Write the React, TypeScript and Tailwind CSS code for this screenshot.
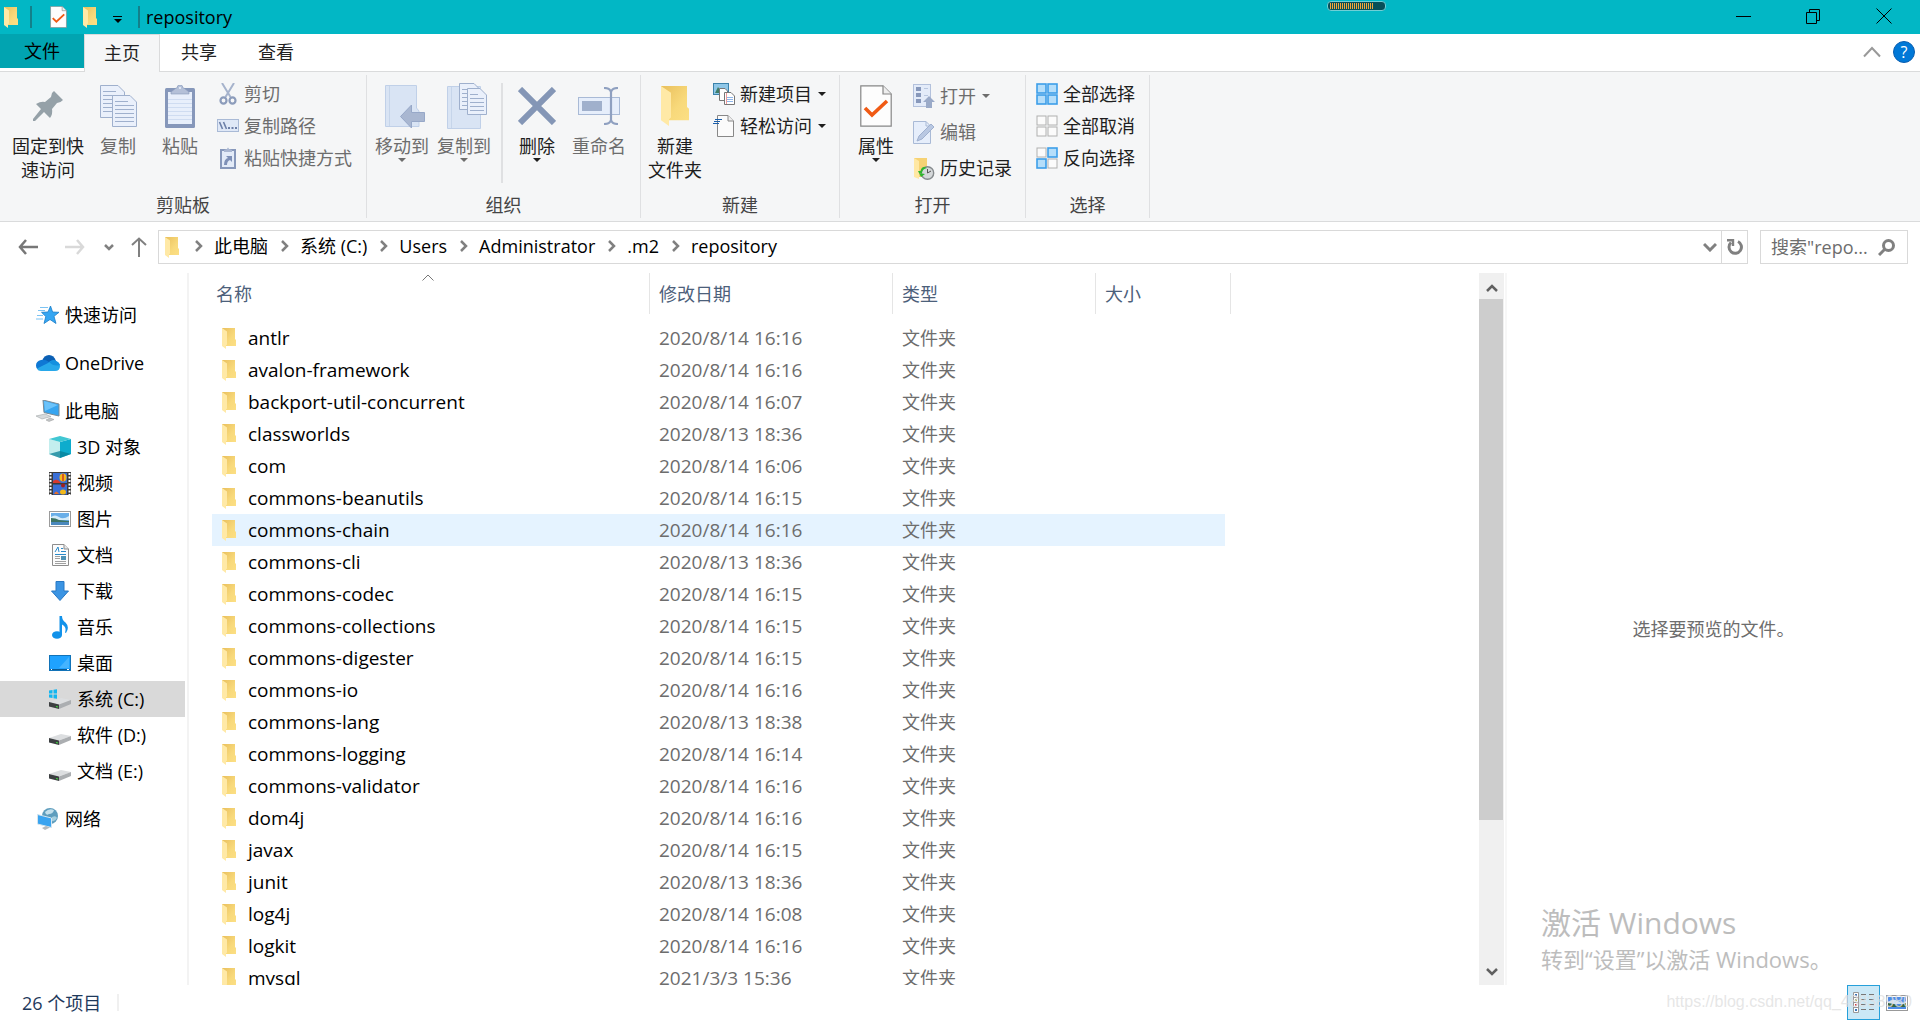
import type { ReactNode } from 'react';

const files = [
  ['antlr', '2020/8/14 16:16'],
  ['avalon-framework', '2020/8/14 16:16'],
  ['backport-util-concurrent', '2020/8/14 16:07'],
  ['classworlds', '2020/8/13 18:36'],
  ['com', '2020/8/14 16:06'],
  ['commons-beanutils', '2020/8/14 16:15'],
  ['commons-chain', '2020/8/14 16:16'],
  ['commons-cli', '2020/8/13 18:36'],
  ['commons-codec', '2020/8/14 16:15'],
  ['commons-collections', '2020/8/14 16:15'],
  ['commons-digester', '2020/8/14 16:15'],
  ['commons-io', '2020/8/14 16:16'],
  ['commons-lang', '2020/8/13 18:38'],
  ['commons-logging', '2020/8/14 16:14'],
  ['commons-validator', '2020/8/14 16:16'],
  ['dom4j', '2020/8/14 16:16'],
  ['javax', '2020/8/14 16:15'],
  ['junit', '2020/8/13 18:36'],
  ['log4j', '2020/8/14 16:08'],
  ['logkit', '2020/8/14 16:16'],
  ['mysql', '2021/3/3 15:36'],
];

const crumbs = ['此电脑', '系统 (C:)', 'Users', 'Administrator', '.m2', 'repository'];

const FolderIcon = ({ className = 'h-[21px] w-[14px]' }: { className?: string }) => (
  <svg viewBox="0 0 28 42" className={className} preserveAspectRatio="none">
    <defs>
      <linearGradient id="folderBack" x1="0" y1="0" x2="1" y2="1">
        <stop offset="0" stopColor="#e9bf5c" />
        <stop offset="0.6" stopColor="#f8d97b" />
        <stop offset="1" stopColor="#fcdf84" />
      </linearGradient>
    </defs>
    <path d="M0 0H26V22L28 24V36H8L0 30Z" fill="url(#folderBack)" />
    <path d="M0 0L10 7V33L8 35V42L0 36Z" fill="#ffe9a6" />
  </svg>
);

const PinIcon = () => (
  <svg viewBox="0 0 30 30" className="h-[30px] w-[30px]">
    <path d="M21 0L30 9L27.500 11L24 12L19 18Q20 23 17 27L11 21L2 30H0V28L8 18L3 13Q8 10 12 11L18 6L19 2Z" fill="#95a1a8" />
  </svg>
);

// a sheet with a folded corner and ruled lines
const Sheet = ({ x, y, w, h, stroke = '#9fb0cd' }: { x: number; y: number; w: number; h: number; stroke?: string }) => (
  <g transform={`translate(${x} ${y})`} stroke={stroke}>
    <path d={`M.5.5H${w - 7}L${w - 0.5} 7V${h - 0.5}H.5Z`} fill="#eaf0fb" />
    <path d={`M${w - 7}.5V7H${w - 0.5}`} fill="#dbe5f5" />
    <path d={`M3 6.500H${w - 9}M3 10.500H${w - 3}M3 14.500H${w - 3}M3 18.500H${w - 3}M3 22.500H${w - 3}${h > 30 ? `M3 26.500H${w - 3}` : ''}`} />
  </g>
);

const CopyIcon = () => (
  <svg viewBox="0 0 37 43" className="h-[43px] w-[37px]">
    <Sheet x={0} y={0} w={25} h={33} />
    <Sheet x={12} y={10} w={25} h={32} />
  </svg>
);

const PasteIcon = () => (
  <svg viewBox="0 0 30 43" className="h-[43px] w-[30px]">
    <rect x="0" y="3" width="30" height="40" rx="1.500" fill="#8697ba" />
    <rect x="3" y="7" width="24" height="32" fill="#e8effb" />
    <path d="M3 14.500H27M3 18.500H27M3 22.500H27M3 26.500H27M3 30.500H27M3 34.500H27" stroke="#cfdcf1" />
    <path d="M6 9V7L11 3H12Q12 0 15 0Q18 0 18 3H19L24 7V9Z" fill="#b4c0d8" stroke="#8697ba" strokeWidth=".6" />
    <circle cx="15" cy="3" r="1" fill="#eef2fa" />
  </svg>
);

const CutIcon = () => (
  <svg viewBox="0 0 22 22" className="h-[22px] w-[22px]" fill="none" stroke="#8c9cbb">
    <path d="M5 0L13.500 14M17 0L8.500 14" stroke="#a6b3cc" strokeWidth="2" />
    <ellipse cx="6.500" cy="17.500" rx="3" ry="3.200" strokeWidth="2.200" />
    <ellipse cx="15.500" cy="17.500" rx="3" ry="3.200" strokeWidth="2.200" />
  </svg>
);

const PathIcon = () => (
  <svg viewBox="0 0 22 14" className="h-[14px] w-[22px]">
    <rect x=".5" y=".5" width="21" height="12" fill="#dfe8f7" stroke="#a9bad6" />
    <path d="M2.500 3L5.500 10M6.500 3L9.500 10" stroke="#6c7fa8" strokeWidth="1.600" />
    <path d="M11 9H13M14.500 9H16.500M18 9H20" stroke="#6c7fa8" strokeWidth="2" />
  </svg>
);

const ShortcutIcon = () => (
  <svg viewBox="0 0 16 22" className="h-[22px] w-[16px]">
    <rect x="1" y="3" width="14" height="18" fill="#e3ebf8" stroke="#8798bb" strokeWidth="2" />
    <path d="M4 5V3L7 2Q8 -1 9 2L12 3V5Z" fill="#a9b6d1" />
    <path d="M6 9H12V15L10 13Q7 14 7 18H4Q4 12 8 11Z" fill="#7e90b7" />
  </svg>
);

const MoveToIcon = () => (
  <svg viewBox="-6 0 46 44" className="h-[44px] w-[46px]">
    <path d="M.5 1.500H31.500V24L34 27V42.500H.5Z" fill="#d9e4f4" stroke="#c0d0e8" />
    <path d="M4.500 2V42" stroke="#c6d5ea" />
    <path d="M15.500 32.500L26.500 21V28.500H39.500V37.500H26.500V44Z" fill="#a9b7d1" stroke="#97a8c8" />
  </svg>
);

const CopyToIcon = () => (
  <svg viewBox="-6 0 47 46" className="h-[46px] w-[47px]">
    <path d="M.5 3.500H33.500V45.500H.5Z" fill="#d9e4f4" stroke="#c0d0e8" />
    <path d="M4.500 4V45" stroke="#c6d5ea" />
    <Sheet x={12} y={0} w={22} h={27} />
    <Sheet x={20} y={5} w={20} h={27} />
  </svg>
);

const DeleteIcon = () => (
  <svg viewBox="0 0 38 38" className="h-[38px] w-[38px]">
    <path d="M2 2L36 36M36 2L2 36" stroke="#8496b6" strokeWidth="6" />
  </svg>
);

const RenameIcon = () => (
  <svg viewBox="0 0 42 38" className="h-[38px] w-[42px]" fill="none">
    <rect x=".5" y="10.500" width="41" height="17" fill="#e6eefb" stroke="#a9bad6" />
    <rect x="4" y="14" width="20" height="10" fill="#a0b0cc" />
    <path d="M26 1Q32 1 33 5Q34 1 40 1M33 5V33M26 37Q32 37 33 33Q34 37 40 37" stroke="#8fa0c0" strokeWidth="2.200" />
  </svg>
);

const NewItemIcon = () => (
  <svg viewBox="0 0 22 22" className="h-[22px] w-[22px]">
    <rect x=".5" y=".5" width="15" height="11" fill="#8fc7e8" stroke="#3b82ab" />
    <path d="M2 10L5 4L8 8V10Z" fill="#3d7d69" />
    <path d="M6.500 5.500H12L14.500 8V17.500H6.500Z" fill="#fff" stroke="#777" />
    <path d="M11.500 9.500H18L21.500 13V21.500H11.500Z" fill="#fff" stroke="#777" />
    <path d="M13 14.500H20M13 16.500H20M13 18.500H20" stroke="#8fb5e8" />
    <path d="M13.500 10V21" stroke="#ee9a9a" />
  </svg>
);

const EasyAccessIcon = () => (
  <svg viewBox="0 0 22 22" className="h-[22px] w-[22px]">
    <path d="M4.500.5H15L20.500 6V21.500H4.500Z" fill="#fbfbfb" stroke="#888" />
    <path d="M15 .5V6H20.500" fill="#eee" stroke="#888" />
    <path d="M2 4.500H9M1 6.500H7M0 8.500H6" stroke="#1b5fab" strokeWidth="1.200" />
  </svg>
);

const CheckSheetIcon = ({ className }: { className: string }) => (
  <svg viewBox="0 0 32 42" className={className}>
    <path d="M.8.8H23L31.200 9V41.200H.8Z" fill="#fdfdfd" stroke="#868686" strokeWidth="1.200" />
    <path d="M23 .8V9H31.200" fill="#eee" stroke="#868686" strokeWidth="1.200" />
    <path d="M5 23L12 30L27 16" fill="none" stroke="#f05a14" strokeWidth="3.600" />
  </svg>
);

const OpenIcon = () => (
  <svg viewBox="0 0 22 24" className="h-[24px] w-[22px]">
    <rect x=".5" y=".5" width="17" height="22" fill="#e3ebf9" stroke="#b3c1dc" />
    <path d="M3 3H8V7H3ZM3 9H8V13H3ZM3 15H8V19H3Z" fill="#8798bb" />
    <path d="M11 4.500H15M11 11.500H15" stroke="#b9c7e0" />
    <path d="M16 12L22 18H19V24H13V18H10Z" fill="#9aaac8" />
  </svg>
);

const EditIcon = () => (
  <svg viewBox="0 0 22 23" className="h-[23px] w-[22px]">
    <path d="M.5.5H13L17.500 5V22.500H.5Z" fill="#e6eefb" stroke="#a9bad6" />
    <path d="M13 .5V5H17.500" fill="none" stroke="#a9bad6" />
    <path d="M4 20L6 15L18 3L21 6L9 18Z" fill="#b9c8e2" stroke="#9fb0cf" />
  </svg>
);

const HistoryIcon = () => (
  <svg viewBox="0 0 22 23" className="h-[23px] w-[22px]">
    <path d="M1 1H14V20H5L1 18Z" fill="#f6d274" />
    <path d="M1 1L6 4V22L1 20Z" fill="#ffe8a4" />
    <circle cx="14.500" cy="16" r="6.200" fill="#d5d8da" stroke="#858a8d" strokeWidth="1.400" />
    <path d="M14.500 12V16L18 14" fill="none" stroke="#555" />
    <path d="M6 16H9Q9 12 14 11Q9 8 7.500 14H5L8 20L12 17Z" fill="#2fb52f" />
  </svg>
);

const SelectIcon = ({ on }: { on: boolean[] }) => (
  <svg viewBox="0 0 22 22" className="h-[22px] w-[22px]">
    {on.map((active, i) => (
      <rect
        key={i}
        x={(i % 2) * 11 + 1}
        y={i > 1 ? 12 : 1}
        width="9"
        height="9"
        fill={active ? '#b5defa' : '#fbfbfb'}
        stroke={active ? '#3d9ee9' : '#b0b0b0'}
        strokeWidth={active ? 1.6 : 1}
      />
    ))}
  </svg>
);

const Caret = ({ className = '' }: { className?: string }) => (
  <svg viewBox="0 0 8 4" className={`h-1 w-2 ${className}`}>
    <path d="M0 0H8L4 4Z" fill="currentColor" />
  </svg>
);

const Chevron = ({ d, className = '' }: { d: string; className?: string }) => (
  <svg viewBox="0 0 12 12" className={`h-3 w-3 shrink-0 ${className}`} fill="none" stroke="currentColor" strokeWidth="2.500">
    <path d={d} />
  </svg>
);

const QuickIcon = () => (
  <svg viewBox="0 0 24 18" className="h-[18px] w-6">
    <path d="M14.500 0L16.600 6L23 6.300L18 10.300L20 17.500L14 13.500L8 17.500L9.800 10.500L5.500 6.300L12 6Z" fill="#35a6f2" stroke="#1b7ec9" strokeWidth=".8" />
    <path d="M4 1.500H12M2 4.500H9M1 9.500H7M0 13H7" stroke="#7cc3f3" />
  </svg>
);

const CloudIcon = () => (
  <svg viewBox="0 0 24 16" className="h-4 w-6">
    <path d="M6 6Q8 0 13 0Q18 0 20 6L14 10Z" fill="#0a5fb4" />
    <path d="M5 15Q0 15 0 10.500Q0 6 5 5Q9 4 13 7L17 10L10 15Z" fill="#0f78d4" />
    <path d="M12 8Q16 4 20 6Q24 8 24 11Q24 16 19 16H5Q2 16 1 13.500Z" fill="#28a8ea" />
    <path d="M13 7Q17 4 20 6Q23 7 24 10Q18 12 13 7Z" fill="#1490df" />
  </svg>
);

const PcIcon = () => (
  <svg viewBox="0 0 24 22" className="h-[22px] w-6">
    <path d="M7 0L23 4V16L8 12.500Z" fill="#37a5f0" stroke="#7b8a94" />
    <path d="M8 1L22 5L9 11Z" fill="#6cc3fa" />
    <path d="M0 16L9 14L15 16.500L6 19Z" fill="#d7dadc" stroke="#a2a7aa" strokeWidth=".6" />
    <path d="M10 20L14 18L18 19.500L13 21.500Z" fill="#c2c6c8" stroke="#999" strokeWidth=".5" />
  </svg>
);

const CubeIcon = () => (
  <svg viewBox="0 0 22 22" className="h-[22px] w-[22px]">
    <path d="M0 3L11 6V22L0 18Z" fill="#c3eeee" />
    <path d="M11 6L22 3V18L11 22Z" fill="#0eaccd" />
    <path d="M0 3L11 0L22 3L11 6Z" fill="#41c7d3" />
    <path d="M0 18L11 15L22 18L11 22Z" fill="#087f96" opacity=".75" />
  </svg>
);

const VideoIcon = () => (
  <svg viewBox="0 0 22 23" className="h-[23px] w-[22px]">
    <path d="M0 0H22V23H0Z" fill="#3b3b3b" />
    <path d="M1.500 1V23M20.500 1V23" stroke="#fff" strokeWidth="2" strokeDasharray="2 1.500" />
    <path d="M4 1H18V11H4ZM4 12.500H18V22.500H4Z" fill="#3a6fd6" />
    <path d="M4 9Q8 5 12 11H4Z" fill="#d8392d" />
    <ellipse cx="14" cy="5.500" rx="3.500" ry="4" fill="#f2b91d" />
    <path d="M14 2V9" stroke="#d03a20" strokeWidth="1.500" />
    <ellipse cx="14" cy="20" rx="3" ry="2.500" fill="#f2b91d" />
    <path d="M5 22Q7 17 10 22Z" fill="#e8702a" />
    <circle cx="14" cy="13.500" r="2" fill="#a22020" />
  </svg>
);

const PictureIcon = () => (
  <svg viewBox="0 0 22 16" className="h-4 w-[22px]">
    <rect x=".5" y=".5" width="21" height="15" fill="#fff" stroke="#9b9b9b" />
    <path d="M2 2H20V14H2Z" fill="#69aee8" />
    <path d="M2 6Q6 3 10 6T20 5V9H2Z" fill="#d5ebf8" />
    <path d="M2 7Q7 7 10 9L20 10V11H2Z" fill="#3d7463" />
    <path d="M2 11H20V14H2Z" fill="#4a88bd" />
  </svg>
);

const DocIcon = () => (
  <svg viewBox="0 0 17 22" className="h-[22px] w-[17px]">
    <path d="M.5.5H12L16.500 5V21.500H.5Z" fill="#fcfcfc" stroke="#8d8d8d" />
    <path d="M12 .5V5H16.500" fill="#e8e8e8" stroke="#8d8d8d" />
    <path d="M3 8L6 3L7 8M9 4.500H11M9 7.500H14M3 10.500H14" fill="none" stroke="#2a8ac9" />
    <path d="M3 12.500H8M3 14.500H8M3 17.500H14M3 19.500H14" stroke="#a0a0a0" />
    <path d="M9 12H14V16H9Z" fill="#4e92b5" />
  </svg>
);

const DownloadIcon = () => (
  <svg viewBox="0 0 18 20" className="h-5 w-[18px]">
    <path d="M5 .5H13V10H17.500L9 19.500L.5 10H5Z" fill="#3b94e3" stroke="#2878c4" />
  </svg>
);

const MusicIcon = () => (
  <svg viewBox="0 0 17 23" className="h-[23px] w-[17px]">
    <ellipse cx="5" cy="19" rx="5" ry="3.800" fill="#1292ea" />
    <path d="M7.500 0H10Q10 4 13.500 6.500Q18 11 14 17L13 16.500Q15 11 10 8.500V19H7.500Z" fill="#1292ea" />
  </svg>
);

const DesktopIcon = () => (
  <svg viewBox="0 0 22 16" className="h-4 w-[22px]">
    <rect x=".5" y=".5" width="21" height="15" fill="#1fa2ff" stroke="#1273b8" />
    <path d="M10 13L20 2V13Z" fill="#45b4ff" />
    <path d="M1 14.500H21" stroke="#0d5a92" />
    <path d="M2 14.500H3M18 14.500H20" stroke="#fff" />
  </svg>
);

const DriveIcon = ({ system = false }: { system?: boolean }) => (
  <svg viewBox="0 0 22 22" className="h-[22px] w-[22px]">
    {system && <path d="M0 2.500L3.500 2V5.500H0ZM4.500 1.800L8 1.300V5.500H4.500ZM0 6.500H3.500V10L0 9.500ZM4.500 6.500H8V10.700L4.500 10.200Z" fill="#13b6f0" />}
    <path d="M0 14L12 10L22 12L10 16.500Z" fill="#dcdee0" />
    <path d="M10 16.500L22 12V16L10 21Z" fill="#abaeb1" />
    <path d="M0 14L10 16.500V21L0 18.500Z" fill="#3c3f41" />
    <path d="M7 18.500L9 19" stroke="#3ddc3d" strokeWidth="1.200" />
  </svg>
);

const NetworkIcon = () => (
  <svg viewBox="0 0 22 22" className="h-[22px] w-[22px]">
    <circle cx="13" cy="8" r="8" fill="#5e9dbd" />
    <path d="M8 4Q12 0 17 2Q16 6 12 6Q9 8 8 4Z" fill="#c3e0ec" />
    <path d="M15 9Q19 7 20 10Q18 14 15 13Z" fill="#a5cede" />
    <path d="M.5 6.500L14.500 10V19.500L.5 16Z" fill="#3aa4f0" stroke="#d5e5ee" />
    <path d="M5 20L9 18L13 19.500L8 22Z" fill="#b5babd" />
  </svg>
);

type Item = { label: string; icon: ReactNode; child?: boolean; active?: boolean; gap?: boolean };

const places: Item[] = [
  { label: '快速访问', icon: <QuickIcon /> },
  { label: 'OneDrive', icon: <CloudIcon />, gap: true },
  { label: '此电脑', icon: <PcIcon />, gap: true },
  { label: '3D 对象', icon: <CubeIcon />, child: true },
  { label: '视频', icon: <VideoIcon />, child: true },
  { label: '图片', icon: <PictureIcon />, child: true },
  { label: '文档', icon: <DocIcon />, child: true },
  { label: '下载', icon: <DownloadIcon />, child: true },
  { label: '音乐', icon: <MusicIcon />, child: true },
  { label: '桌面', icon: <DesktopIcon />, child: true },
  { label: '系统 (C:)', icon: <DriveIcon system />, child: true, active: true },
  { label: '软件 (D:)', icon: <DriveIcon />, child: true },
  { label: '文档 (E:)', icon: <DriveIcon />, child: true },
  { label: '网络', icon: <NetworkIcon />, gap: true },
];

const Group = ({ label, className, children }: { label: string; className: string; children: ReactNode }) => (
  <section className={`flex shrink-0 flex-col border-r border-[#dfe0e2] ${className}`}>
    <div className="flex flex-1 items-start pl-1">{children}</div>
    <h2 className="pb-px text-center leading-6 text-[#444]">{label}</h2>
  </section>
);

type ButtonProps = { icon: ReactNode; label: string; className?: string; disabled?: boolean; menu?: boolean };

const BigButton = ({ icon, label, className = 'w-[60px]', disabled, menu }: ButtonProps) => (
  <button disabled={disabled} className={`flex shrink-0 flex-col items-center pt-2 text-[#1e1e1e] disabled:text-[#6d6d6d] ${className}`}>
    <span className="flex h-[46px] items-center">{icon}</span>
    <span className="mt-[5px] whitespace-pre leading-6">{label}</span>
    {menu && <Caret />}
  </button>
);

const SmallButton = ({ icon, label, className = 'h-8', disabled, menu }: ButtonProps) => (
  <button disabled={disabled} className={`flex items-center gap-1 whitespace-nowrap text-[#1e1e1e] disabled:text-[#6d6d6d] ${className}`}>
    <span className="flex w-6 justify-center">{icon}</span>
    {label}
    {menu && <Caret className="ml-0.5" />}
  </button>
);

const TitleBar = () => (
  <header className="relative flex h-[34px] shrink-0 items-center bg-[#02b7c5] text-black">
    <div className="flex flex-1 items-center pl-1">
      <FolderIcon />
      <span className="ml-3 h-[22px] w-0.5 bg-[#13808a]" />
      <button aria-label="属性" className="ml-[18px]">
        <CheckSheetIcon className="h-[22px] w-[17px]" />
      </button>
      <button aria-label="新建文件夹" className="ml-4">
        <FolderIcon />
      </button>
      <button aria-label="自定义快速访问工具栏" className="ml-4 flex flex-col items-center gap-0.5 pt-1">
        <span className="h-px w-[9px] bg-black" />
        <Caret />
      </button>
      <span className="ml-4 h-[22px] w-0.5 bg-[#13808a]" />
      <h1 className="ml-1.5">repository</h1>
    </div>
    <div className="absolute right-[534px] top-px flex h-[10px] w-[59px] items-center gap-px rounded border border-[#6fcfd6] bg-[#074f58] pl-0.5">
      {Array.from({ length: 22 }, (_, i) => (
        <span key={i} className="h-1.5 w-px bg-[#f0a63a]" />
      ))}
    </div>
    <div className="flex items-center gap-[54px] pb-0.5 pr-7">
      <button aria-label="最小化">
        <svg viewBox="0 0 16 16" className="h-4 w-4" stroke="black"><path d="M0 8.500H15" /></svg>
      </button>
      <button aria-label="还原">
        <svg viewBox="0 0 16 16" className="h-4 w-4" fill="none" stroke="black"><path d="M.5 4.500H10.500V15.500H.5ZM3.500 4V1.500H13.500V12.500H11" /></svg>
      </button>
      <button aria-label="关闭">
        <svg viewBox="0 0 16 16" className="h-4 w-4" stroke="black"><path d="M.5.500L15.500 15.500M15.500.500L.5 15.500" /></svg>
      </button>
    </div>
  </header>
);

const Tabs = () => (
  <nav className="flex h-[38px] shrink-0 border-b border-[#dadbdc]">
    <button className="h-[34px] w-[84px] bg-[#01a4b1] text-black">文件</button>
    <button className="-mb-px h-[38px] w-[76px] border-x border-t border-[#dadbdc] bg-[#f5f6f7] pb-0.5 text-[#222]">主页</button>
    <button className="w-[78px] pb-0.5 text-[#222]">共享</button>
    <button className="w-[76px] pb-0.5 text-[#222]">查看</button>
    <div className="ml-auto flex items-center gap-3 pb-0.5 pr-[5px]">
      <button aria-label="最小化功能区">
        <svg viewBox="0 0 18 12" className="h-3 w-[18px]" fill="none" stroke="#999" strokeWidth="2"><path d="M1 10.500L9 2L17 10.500" /></svg>
      </button>
      <button aria-label="帮助" className="h-[22px] w-[22px] rounded-full border border-[#0a5eb0] bg-[#0078d7] text-base leading-5 text-white">?</button>
    </div>
  </nav>
);

const Ribbon = () => (
  <div className="flex h-[150px] shrink-0 border-b border-[#dadbdc] bg-[#f5f6f7] py-[3px]">
    <Group label="剪贴板" className="w-[367px]">
      <BigButton icon={<PinIcon />} label={'固定到快\n速访问'} className="ml-1 w-20" />
      <BigButton icon={<CopyIcon />} label="复制" disabled />
      <BigButton icon={<PasteIcon />} label="粘贴" className="w-16" disabled />
      <div className="ml-1 pt-[3px]">
        <SmallButton icon={<CutIcon />} label="剪切" disabled />
        <SmallButton icon={<PathIcon />} label="复制路径" disabled />
        <SmallButton icon={<ShortcutIcon />} label="粘贴快捷方式" disabled />
      </div>
    </Group>
    <Group label="组织" className="w-[274px]">
      <BigButton icon={<MoveToIcon />} label="移动到" className="w-[62px]" disabled menu />
      <BigButton icon={<CopyToIcon />} label="复制到" className="w-[62px]" disabled menu />
      <span className="ml-1.5 mr-1 mt-2 h-[100px] w-0.5 bg-[#dfe0e2]" />
      <BigButton icon={<DeleteIcon />} label="删除" menu />
      <BigButton icon={<RenameIcon />} label="重命名" className="w-16" disabled />
    </Group>
    <Group label="新建" className="w-[199px]">
      <BigButton icon={<FolderIcon className="h-[40px] w-[28px]" />} label={'新建\n文件夹'} />
      <div className="ml-[7px] pt-[3px]">
        <SmallButton icon={<NewItemIcon />} label="新建项目" menu />
        <SmallButton icon={<EasyAccessIcon />} label="轻松访问" menu />
      </div>
    </Group>
    <Group label="打开" className="w-[186px]">
      <BigButton icon={<CheckSheetIcon className="h-[42px] w-[32px]" />} label="属性" className="w-16" menu />
      <div className="ml-1 pt-[3px]">
        <SmallButton icon={<OpenIcon />} label="打开" className="h-9" disabled menu />
        <SmallButton icon={<EditIcon />} label="编辑" className="h-9" disabled />
        <SmallButton icon={<HistoryIcon />} label="历史记录" className="h-9" />
      </div>
    </Group>
    <Group label="选择" className="w-[124px]">
      <div className="ml-[5px] pt-[3px]">
        <SmallButton icon={<SelectIcon on={[true, true, true, true]} />} label="全部选择" />
        <SmallButton icon={<SelectIcon on={[false, false, false, false]} />} label="全部取消" />
        <SmallButton icon={<SelectIcon on={[false, true, true, false]} />} label="反向选择" />
      </div>
    </Group>
  </div>
);

const AddressBar = () => (
  <div className="flex h-[51px] shrink-0 items-center pb-px pr-3 text-[#808080]">
    <div className="flex w-[158px] shrink-0 items-center pl-[18px]">
      <button aria-label="返回">
        <svg viewBox="0 0 20 16" className="h-4 w-5" fill="none" stroke="#777" strokeWidth="2.500"><path d="M8 1L2 8L8 15M2 8H20" /></svg>
      </button>
      <button aria-label="前进" className="ml-[27px]" disabled>
        <svg viewBox="0 0 20 16" className="h-4 w-5" fill="none" stroke="#d9d9d9" strokeWidth="2.500"><path d="M12 1L18 8L12 15M18 8H0" /></svg>
      </button>
      <button aria-label="最近浏览的位置" className="ml-[18px]"><Chevron d="M2 4L6 8L10 4" /></button>
      <button aria-label="上移到 .m2" className="ml-4">
        <svg viewBox="0 0 16 20" className="h-5 w-4" fill="none" stroke="#808080" strokeWidth="2"><path d="M1 8L8 1.500L15 8M8 2V20" /></svg>
      </button>
    </div>
    <div className="flex h-[34px] flex-1 items-center border border-[#d9d9d9] pl-1.5">
      <FolderIcon />
      <ol className="ml-[13px] flex flex-1 pb-0.5">
        {crumbs.map((name) => (
          <li key={name} className="mr-2.5 flex items-center">
            <Chevron d="M4 1L9 6L4 11" />
            <a href="#" className="ml-2.5 whitespace-nowrap text-black">{name}</a>
          </li>
        ))}
      </ol>
      <button aria-label="以前的位置" className="mr-1">
        <svg viewBox="0 0 14 10" className="h-2.5 w-3.5" fill="none" stroke="currentColor" strokeWidth="3"><path d="M1 2L7 8L13 2" /></svg>
      </button>
      <button aria-label="刷新" className="flex h-full w-[26px] items-center justify-center border-l border-[#d9d9d9]">
        <svg viewBox="0 0 16 16" className="h-4 w-4" fill="none" stroke="currentColor" strokeWidth="3">
          <path d="M11 2.500A6.200 6.200 0 1 1 4 3.500" />
          <path d="M0 1.300H6V7" strokeWidth="2.400" />
        </svg>
      </button>
    </div>
    <form className="ml-3 flex h-[34px] w-[148px] items-center border border-[#d9d9d9] pl-2.5 pr-3">
      <input aria-label="搜索" placeholder={'搜索"repo...'} className="w-0 flex-1 outline-none placeholder:text-[#6d6d6d]" />
      <svg viewBox="0 0 17 17" className="h-[17px] w-[17px]" fill="none" stroke="currentColor" strokeWidth="3">
        <circle cx="10.500" cy="6.500" r="5" />
        <path d="M7 10L1 16" />
      </svg>
    </form>
  </div>
);

const Sidebar = () => (
  <nav className="w-[189px] shrink-0 border-r-2 border-[#f3f3f3] pt-6">
    {places.map(({ label, icon, child, active, gap }) => (
      <a
        key={label}
        href="#"
        className={`mr-0.5 flex h-9 items-center gap-[5px] whitespace-nowrap text-black ${child ? 'pl-12' : 'pl-9'} ${gap ? 'mt-3' : ''} ${active ? 'bg-[#d9d9d9]' : ''}`}
      >
        <span className="flex w-6 justify-center">{icon}</span>
        {label}
      </a>
    ))}
  </nav>
);

const headCell = 'flex h-[41px] w-full items-center border-r border-[#e5e5e5] font-normal text-[#4c607a]';

const FileList = () => (
  <main className="min-w-0 flex-1 overflow-hidden pl-[23px]">
    <table className="w-[1019px] table-fixed border-collapse text-left">
      <colgroup>
        <col className="w-[438px]" />
        <col className="w-[243px]" />
        <col className="w-[203px]" />
        <col className="w-[129px]" />
        <col className="w-[6px]" />
      </colgroup>
      <thead>
        <tr>
          <th className="relative p-0 pb-2">
            <button className={`${headCell} pl-1`}>名称</button>
            <svg viewBox="0 0 12 7" className="absolute left-[210px] top-px h-[7px] w-3" fill="none" stroke="#777"><path d="M.5 6.500L6 1L11.500 6.500" /></svg>
          </th>
          <th className="p-0 pb-2"><button className={`${headCell} pl-[9px]`}>修改日期</button></th>
          <th className="p-0 pb-2"><button className={`${headCell} pl-[9px]`}>类型</button></th>
          <th colSpan={2} className="p-0 pb-2"><button className={`${headCell} pl-[9px]`}>大小</button></th>
        </tr>
      </thead>
      <tbody className="text-[#6d6d6d]">
        {files.map(([name, date]) => {
          const cell = `h-8 p-0 ${name === 'commons-chain' ? 'bg-[#e5f3ff]' : ''}`;
          return (
            <tr key={name}>
              <td className={cell}>
                <div className="flex items-center gap-3 pl-2.5 text-[19px] text-black">
                  <FolderIcon />
                  {name}
                </div>
              </td>
              <td className={`${cell} text-[19px]`}><div className="pl-[9px]">{date}</div></td>
              <td className={cell}><div className="pl-[9px]">文件夹</div></td>
              <td className={cell} />
              <td />
            </tr>
          );
        })}
      </tbody>
    </table>
  </main>
);

const ScrollBar = () => (
  <div className="flex w-[25px] shrink-0 flex-col items-center bg-[#f0f0f0] text-[#606060]">
    <button aria-label="向上滚动" className="flex h-[26px] w-full shrink-0 items-center justify-center pt-1">
      <Chevron d="M1 9L6 4L11 9" />
    </button>
    <div className="w-full flex-1">
      <div className="h-[79%] w-6 bg-[#cdcdcd]" />
    </div>
    <button aria-label="向下滚动" className="flex h-[26px] w-full shrink-0 items-center justify-center">
      <Chevron d="M1 3L6 8L11 3" />
    </button>
  </div>
);

const StatusBar = () => (
  <footer className="relative flex h-[35px] shrink-0 items-center bg-white pr-3 text-[#1e395b]">
    <span className="pl-[22px]">26 个项目</span>
    <span className="ml-4 h-[17px] w-0.5 bg-[#f0f0f0]" />
    <button aria-label="详细信息" className="ml-auto flex h-[35px] w-[33px] items-center justify-center border border-[#26a0da] bg-[#cbe8f6]">
      <svg viewBox="0 0 22 21" className="h-[21px] w-[22px]" fill="none">
        <path d="M.5.5H5.500V20.500H.5ZM.5 5.500H5.500M.5 10.500H5.500M.5 15.500H5.500" fill="#fff" stroke="#999" />
        <path d="M2 3H4M2 18H4" stroke="#3a77b8" strokeWidth="2" />
        <path d="M2 8H4" stroke="#8a9a2a" strokeWidth="2" />
        <path d="M2 13H4" stroke="#d04020" strokeWidth="2" />
        <path d="M8 2.500H13M16 2.500H21M8 7.500H13M16 7.500H21M8 12.500H13M16 12.500H21M8 17.500H13M16 17.500H21" stroke="#777" />
      </svg>
    </button>
    <button aria-label="大缩略图" className="ml-1.5">
      <svg viewBox="0 0 22 16" className="h-4 w-[22px]">
        <rect x=".5" y=".5" width="21" height="15" fill="#fff" stroke="#999" />
        <path d="M2 2H20V14H2Z" fill="#4d8ce6" />
        <path d="M2 7Q7 3 12 6T20 6V9H2Z" fill="#cfe2f5" />
        <path d="M2 8L8 9L12 11L20 8V12H2Z" fill="#35653f" />
      </svg>
    </button>
    <span className="pointer-events-none absolute bottom-1.5 right-2 font-['Liberation_Sans',sans-serif] text-base text-[#e0e0e0]/80">
      https://blog.csdn.net/qq_48838980
    </span>
  </footer>
);

const App = () => {
  return (
    <div className="flex h-screen flex-col overflow-hidden bg-white font-['Open_Sans','Noto_Sans_CJK_SC',sans-serif] text-lg leading-6">
      <TitleBar />
      <Tabs />
      <Ribbon />
      <AddressBar />
      <div className="flex min-h-0 flex-1">
        <Sidebar />
        <FileList />
        <ScrollBar />
        <aside className="relative ml-px w-[415px] shrink-0 border-l-2 border-[#f7f7f7]">
          <p className="flex h-full items-center justify-center text-[#6d6d6d]">选择要预览的文件。</p>
          <div className="absolute bottom-2.5 left-[34px] whitespace-nowrap text-[#bdbdbd]">
            <p className="text-[30px] leading-10">激活 Windows</p>
            <p className="text-[22px] leading-8">转到“设置”以激活 Windows。</p>
          </div>
        </aside>
      </div>
      <StatusBar />
    </div>
  );
};

export default App;
